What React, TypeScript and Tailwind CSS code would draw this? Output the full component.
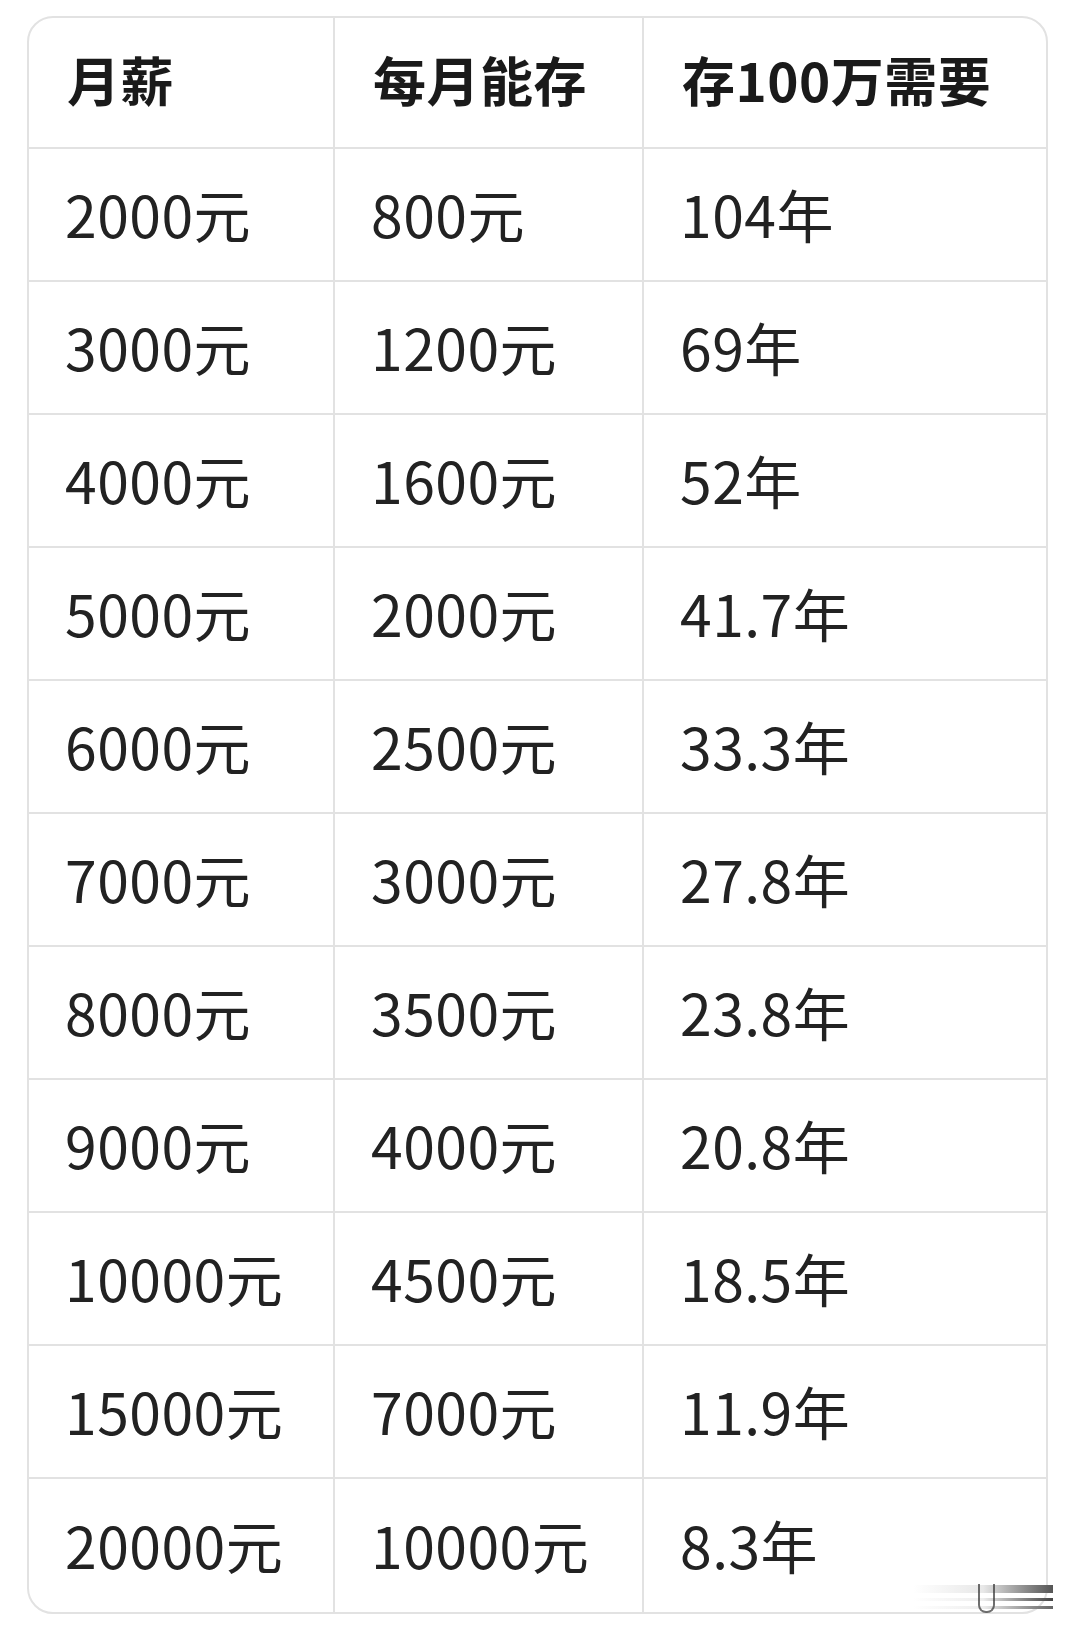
const rows: [string, string, string][] = [
  ["2000元", "800元", "104年"],
  ["3000元", "1200元", "69年"],
  ["4000元", "1600元", "52年"],
  ["5000元", "2000元", "41.7年"],
  ["6000元", "2500元", "33.3年"],
  ["7000元", "3000元", "27.8年"],
  ["8000元", "3500元", "23.8年"],
  ["9000元", "4000元", "20.8年"],
  ["10000元", "4500元", "18.5年"],
  ["15000元", "7000元", "11.9年"],
  ["20000元", "10000元", "8.3年"],
];

const cols = "grid grid-cols-[306px_309px_1fr]";

export default function App() {
  return (
    <div
      className="relative min-h-[1636px] w-[1080px] bg-white pt-[16px] pl-[27px] text-[#222]"
      style={{ fontFamily: '"Noto Sans CJK SC", "Noto Sans", sans-serif' }}
    >
      <div className="w-[1021px] overflow-hidden rounded-[26px] border-2 border-[#e2e2e2]">
        <div className={`${cols} h-[131px] border-b-2 border-[#e2e2e2]`}>
          {["月薪", "每月能存", "存100万需要"].map((h, i) => (
            <div
              key={h}
              className={`flex items-center pb-[6px] pl-[38px] text-[53px] font-bold tracking-[0.5px] text-[#1a1a1a] ${i < 2 ? "border-r-2 border-[#e2e2e2]" : ""}`}
            >
              {h}
            </div>
          ))}
        </div>
        {rows.map((r, ri) => (
          <div
            key={ri}
            className={`${cols} h-[133px] ${ri < rows.length - 1 ? "border-b-2 border-[#e2e2e2]" : ""}`}
          >
            {r.map((c, i) => (
              <div
                key={i}
                className={`flex items-center pb-[2px] pl-[36px] text-[57px] font-normal tracking-[0.5px] ${i < 2 ? "border-r-2 border-[#e2e2e2]" : ""}`}
              >
                {c}
              </div>
            ))}
          </div>
        ))}
      </div>

      {/* faded watermark smudge over the bottom-right corner */}
      <div className="absolute left-[913px] top-[1584px] flex h-[29px] w-[140px] flex-col gap-[5px] pt-[1px]">
        <div className="h-[8px] bg-gradient-to-r from-white/0 via-[#e8e8e8] to-[#555]" />
        <div className="h-[3px] bg-gradient-to-r from-white/0 via-[#eee] to-[#444]" />
        <div className="h-[3px] bg-gradient-to-r from-white/0 via-[#eee] to-[#666]" />
        <div className="absolute left-[65px] top-0 h-[29px] w-[17px] rounded-b-[8px] border-x-2 border-b-2 border-[#333]/70" />
      </div>
    </div>
  );
}
